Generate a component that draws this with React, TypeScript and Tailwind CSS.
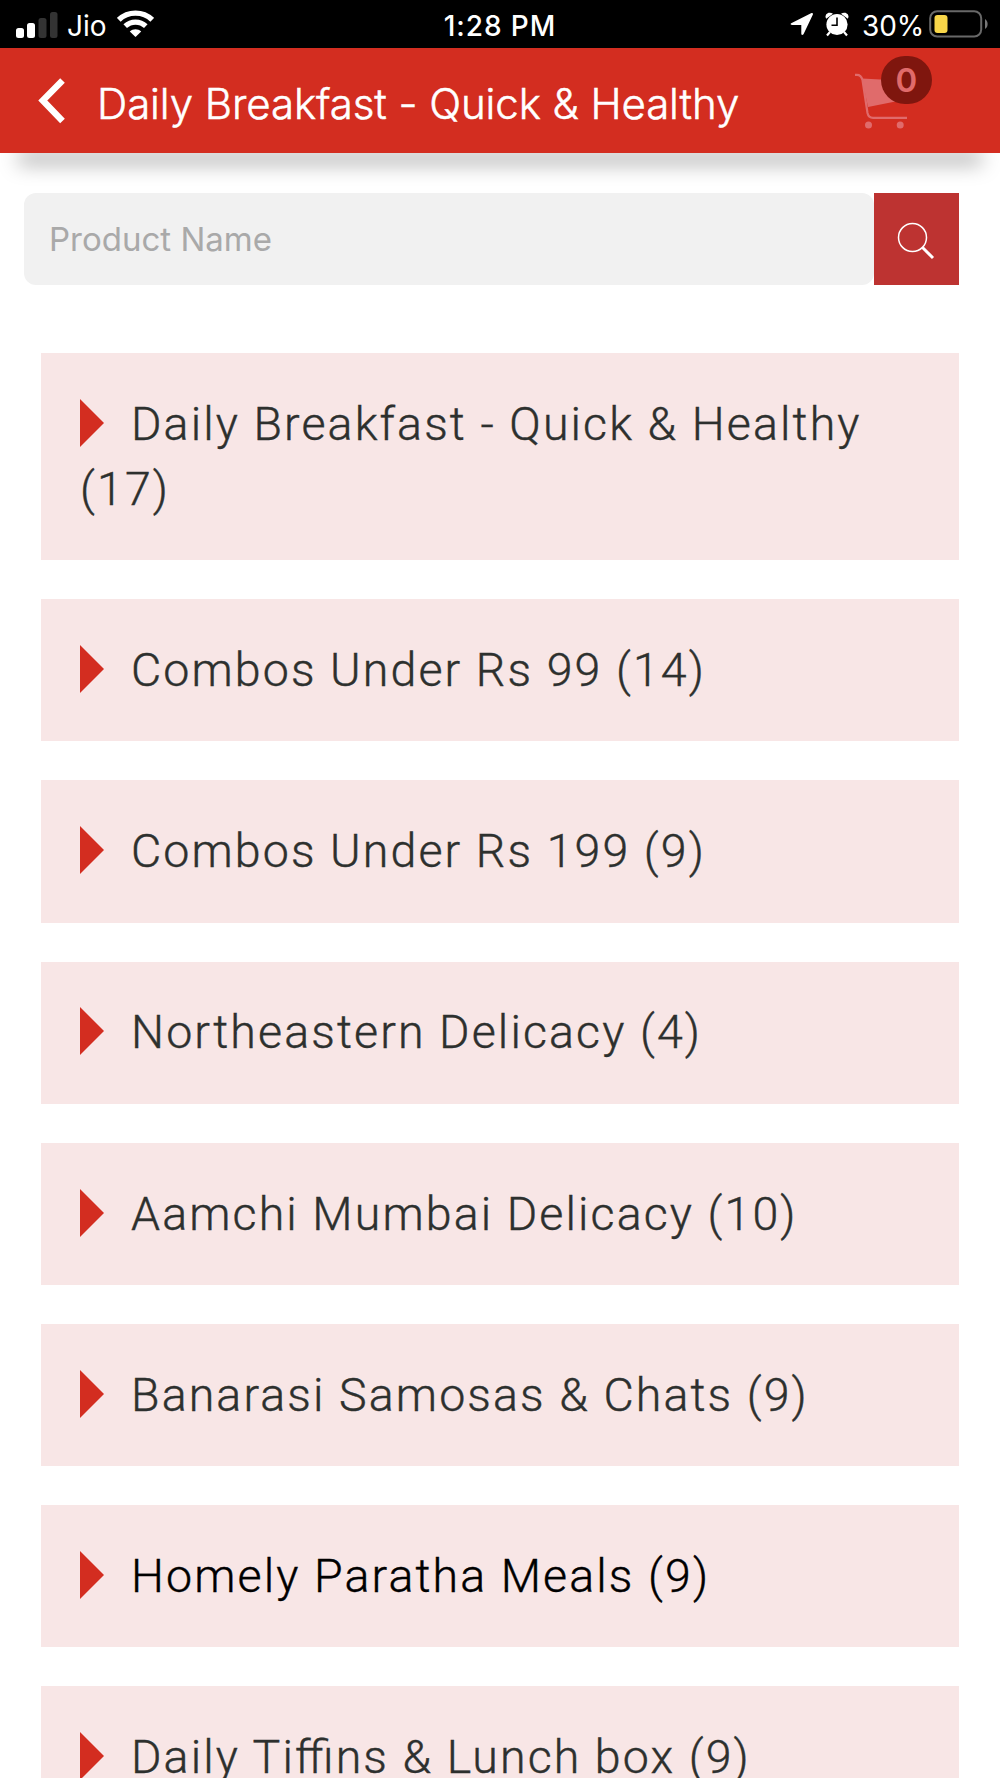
import React from "react";

const categories = [
  { name: "Daily Breakfast - Quick & Healthy", count: 17 },
  { name: "Combos Under Rs 99", count: 14 },
  { name: "Combos Under Rs 199", count: 9 },
  { name: "Northeastern Delicacy", count: 4 },
  { name: "Aamchi Mumbai Delicacy", count: 10 },
  { name: "Banarasi Samosas & Chats", count: 9 },
  { name: "Homely Paratha Meals", count: 9, active: true },
  { name: "Daily Tiffins & Lunch box", count: 9 },
];

function StatusBar() {
  return (
    <div className="grid h-12 grid-cols-3 items-center bg-black text-[28px] leading-none text-white">
      <div className="flex items-center pl-4">
        <svg width="42" height="27" viewBox="0 0 42 27">
          <rect x="0" y="17" width="8" height="10" rx="2.5" fill="#fff" />
          <rect x="11" y="12" width="8" height="15" rx="2.5" fill="#fff" />
          <rect x="22.500" y="7" width="8" height="20" rx="2.500" fill="#333" />
          <rect x="34" y="1" width="7.500" height="26" rx="2.500" fill="#333" />
        </svg>
        <span className="ml-[9px] mt-[3px] w-[50px] whitespace-nowrap">Jio</span>
        <svg width="37" height="28" viewBox="0 0 37 28" fill="none" stroke="#fff">
          <path d="M1.800 9.800C11 .9 26 .9 35.200 9.800" strokeWidth="5.300" />
          <path d="M8.200 16.200C14 10.800 23 10.800 28.800 16.200" strokeWidth="5.200" />
          <path d="M12.800 21.500C16 18.400 21 18.400 24.200 21.500L18.500 27Z" fill="#fff" stroke="none" />
        </svg>
      </div>
      <div className="mt-[3px] text-center font-medium tracking-[0.900px]">1:28 PM</div>
      <div className="flex items-center justify-end pr-[12px]">
        <svg width="24" height="24" viewBox="0 0 24 24" className="mr-[11px]">
          <path d="M1.200 11.200L21.500 1.100Q23.300.7 22.900 2.500L13.500 22.300Q11.700 24 11.300 21.800V13H2Q-.5 12.500 1.200 11.200Z" fill="#fff" />
        </svg>
        <svg width="24" height="25" viewBox="0 0 24 25" className="mr-[13px]">
          <path d="M1.200 6.800Q-1 2.500 3.500.8Q6 .2 8 1.800ZM22.800 6.800Q25 2.500 20.500.8Q18 .2 16 1.800Z" fill="#fff" />
          <circle cx="12" cy="12.500" r="10.600" fill="#fff" />
          <path d="M5 20L2 23.500M19 20L22 23.500" stroke="#fff" strokeWidth="2.200" />
          <path d="M12 5.500V13.200H6.500" fill="none" stroke="#000" strokeWidth="1.600" />
        </svg>
        <span className="mt-[3px] w-[67px] whitespace-nowrap tracking-[-0.100px]">30%</span>
        <svg width="59" height="28" viewBox="0 0 59 28">
          <rect x="1.200" y="1.200" width="51" height="25.300" rx="7" fill="none" stroke="#686868" strokeWidth="2" />
          <rect x="5.500" y="5" width="13" height="18" rx="3" fill="#f8d649" />
          <path d="M56 9C59.500 11 59.500 17 56 19Z" fill="#777" />
        </svg>
      </div>
    </div>
  );
}

function Header() {
  return (
    <header className="relative z-10 flex h-[105px] items-center bg-[#d32d20] text-white">
      <svg width="27" height="46" viewBox="0 0 27 46" className="ml-[38px]" fill="none">
        <path d="M24.500 2.500L4.800 22.500L24.500 43" stroke="#fff" strokeWidth="6.500" />
      </svg>
      <h1 className="ml-[32px] mt-[6px] whitespace-nowrap text-[42px] font-light leading-none tracking-[-0.080px] [-webkit-text-stroke:0.5px]">
        Daily Breakfast - Quick &amp; Healthy
      </h1>
      <div className="ml-auto mr-[68px] h-[73px] w-[78px] self-start pt-[8px]">
        <div className="relative">
          <svg width="78" height="73" viewBox="0 0 78 73" className="block" fill="none">
            <path d="M1 18.800H3Q7 18.800 8.500 24L13.500 57Q14.500 61.800 19 61.800H53" stroke="#e06b6b" strokeWidth="2.200" />
            <path d="M8 22.500L54 25V43L14 51Z" fill="#e06b6b" />
            <circle cx="14.500" cy="69" r="3.500" fill="#e06b6b" />
            <circle cx="46.200" cy="69" r="3.500" fill="#e06b6b" />
          </svg>
          <span className="absolute right-0 top-0 flex h-[48px] w-[51px] items-center justify-center rounded-full bg-[#7f160e] text-[33px] font-semibold leading-none text-[#e06b6b]">
            0
          </span>
        </div>
      </div>
    </header>
  );
}

function SearchBar() {
  return (
    <div className="ml-[24px] mr-[41px] mt-[40px] flex h-[92px]">
      <input
        type="text"
        placeholder="Product Name"
        className="w-[850px] rounded-xl bg-[#f1f1f1] px-[25px] pt-[2px] text-[33px] outline-none placeholder:text-[#a9a9a9]"
      />
      <button className="flex flex-1 items-center justify-center bg-[#bd3331] pr-[2px] pt-[3px]">
        <svg width="38" height="38" viewBox="0 0 38 38" fill="none" stroke="#fff">
          <circle cx="15.500" cy="15.500" r="14" strokeWidth="1.500" />
          <path d="M25.500 25.500L36 36" strokeWidth="3" />
        </svg>
      </button>
    </div>
  );
}

export default function App() {
  return (
    <div className="h-[1778px] w-[1000px] overflow-hidden bg-white font-['Inter',sans-serif]">
      <StatusBar />
      <Header />
      <div className="mx-[24px] h-0 shadow-[0_5px_20px_6px_rgba(0,0,0,0.34)]" />
      <SearchBar />
      <main className="ml-[41px] mr-[41px] mt-[68px] flex flex-col gap-[39px] font-['Roboto',sans-serif]">
        {categories.map((c) => (
          <section
            key={c.name}
            className={`bg-[#f8e6e6] px-[39px] pb-[37.900px] pt-[38.900px] text-[46.500px] font-light leading-[65.300px] tracking-[2.120px] [-webkit-text-stroke:0.4px] [font-feature-settings:'liga'_1] ${c.active ? "text-black" : "text-[#2d302e]"}`}
          >
            <span className="mr-[27px] inline-block h-0 w-0 border-y-[24px] border-l-[24px] border-y-transparent border-l-[#d32d20] align-[-7px]" />
            {c.name} ({c.count})
          </section>
        ))}
      </main>
    </div>
  );
}
